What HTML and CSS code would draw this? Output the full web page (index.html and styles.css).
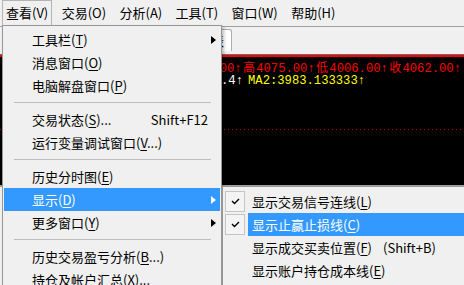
FILE: index.html
```html
<!DOCTYPE html>
<html lang="zh-CN">
<head>
  <meta charset="UTF-8">
  <title>查看菜单</title>
  <link rel="stylesheet" href="styles.css">
</head>
<body>
  <nav class="menubar">
    <span class="top-item open">查看(V)</span>
    <span class="top-item">交易(O)</span>
    <span class="top-item">分析(A)</span>
    <span class="top-item">工具(T)</span>
    <span class="top-item">窗口(W)</span>
    <span class="top-item">帮助(H)</span>
  </nav>

  <div class="toolbar">
    <div class="tab">行情图表</div>
  </div>

  <div class="chart">
    <div class="chart-body">
      <div class="chart-line quote"><span class="cn">开</span>4020.00↑<span class="cn">高</span>4075.00↑<span class="cn">低</span>4006.00↑<span class="cn">收</span>4062.00↑</div>
      <div class="chart-line ma">
        <span class="ma1">MA1:4030.4↑</span>
        <span class="ma2">MA2:3983.133333↑</span>
      </div>
      <div class="level"></div>
    </div>
  </div>
  <div class="hscroll"></div>

  <!-- 查看 下拉菜单 -->
  <div class="dropdown">
    <div class="menu-item"><span class="label">工具栏(<u>T</u>)</span><span class="arrow"><i></i></span></div>
    <div class="menu-item"><span class="label">消息窗口(<u>O</u>)</span><span class="arrow"></span></div>
    <div class="menu-item"><span class="label">电脑解盘窗口(<u>P</u>)</span><span class="arrow"></span></div>
    <div class="sep"><hr></div>
    <div class="menu-item"><span class="label">交易状态(<u>S</u>)...</span><span class="key">Shift+F12</span><span class="arrow"></span></div>
    <div class="menu-item"><span class="label">运行变量调试窗口(<u>V</u>...)</span><span class="arrow"></span></div>
    <div class="sep"><hr></div>
    <div class="menu-item"><span class="label">历史分时图(<u>E</u>)</span><span class="arrow"></span></div>
    <div class="menu-item active"><span class="label">显示(<u>D</u>)</span><span class="arrow"><i></i></span></div>
    <div class="menu-item"><span class="label">更多窗口(<u>Y</u>)</span><span class="arrow"><i></i></span></div>
    <div class="sep"><hr></div>
    <div class="menu-item"><span class="label">历史交易盈亏分析(<u>B</u>...)</span><span class="arrow"></span></div>
    <div class="menu-item"><span class="label">持仓及帐户汇总(<u>X</u>)...</span><span class="arrow"></span></div>
  </div>

  <!-- 显示 子菜单 -->
  <div class="submenu">
    <div class="sub-item">
      <span class="check checked">
        <svg width="18" height="19" viewBox="0 0 18 19"><polyline points="6,9 8.5,11.5 13,7" fill="none" stroke="#000" stroke-width="1.4"/></svg>
      </span>
      <span class="sub-label"><span class="sub-text">显示交易信号连线(<u>L</u>)</span></span>
    </div>
    <div class="sub-item">
      <span class="check checked">
        <svg width="18" height="19" viewBox="0 0 18 19"><polyline points="6,9 8.5,11.5 13,7" fill="none" stroke="#000" stroke-width="1.4"/></svg>
      </span>
      <span class="sub-label active"><span class="sub-text">显示止赢止损线(<u>C</u>)</span></span>
    </div>
    <div class="sub-item">
      <span class="check"></span>
      <span class="sub-label"><span class="sub-text">显示成交买卖位置(<u>F</u>)</span><span class="sub-key">(Shift+B)</span></span>
    </div>
    <div class="sub-item">
      <span class="check"></span>
      <span class="sub-label"><span class="sub-text">显示账户持仓成本线(<u>E</u>)</span></span>
    </div>
  </div>
</body>
</html>
```

FILE: styles.css
```css
body {
  margin: 0;
  width: 464px;
  height: 285px;
  overflow: hidden;
  position: relative;
  background: #f0f0f0;
  font-family: "Noto Sans CJK SC", "Microsoft YaHei", sans-serif;
  font-size: 13px;
  color: #000;
}
u { text-decoration-thickness: 1px; text-underline-offset: 2px; }

/* menu bar */
.menubar {
  display: flex;
  height: 26px;
  padding-left: 2px;
  border-bottom: 1px solid #a0a0a0;
  box-sizing: content-box;
}
.top-item {
  padding: 0 3px;
  margin-right: 5.4px;
  line-height: 24px;
  border: 1px solid transparent;
  border-bottom: none;
}
.top-item.open { border-color: #b4b4b4; }

/* toolbar + tab */
.toolbar {
  height: 27px;
  display: flex;
  align-items: flex-start;
  padding-left: 140px;
}
.tab {
  margin-top: 2px;
  width: 92px;
  height: 22px;
  box-sizing: border-box;
  background: #fff;
  border: 1px solid #adadad;
  border-bottom: none;
  border-radius: 0 3px 0 0;
  text-align: right;
  padding-right: 7px;
  line-height: 21px;
}

/* chart */
.chart {
  border-top: 1px solid #6d6d6d;
  border-bottom: 2px solid #a0a0a0;
  background: #000;
}
.chart-body {
  height: 126px;
  border-top: 2px solid #ff0000;
  padding-top: 2px;
  box-sizing: content-box;
  font-family: "Liberation Mono", "DejaVu Sans Mono", "Noto Sans CJK SC", monospace;
  font-size: 12.2px;
}
.chart-line {
  height: 15px;
  line-height: 15px;
  white-space: nowrap;
}
.quote {
  color: #ff0000;
  text-align: right;
  padding-right: 3px;
}
.quote .cn {
  font-family: "Noto Sans CJK SC", sans-serif;
  font-size: 12px;
  padding: 0 1.3px;
}
.ma { display: flex; }
.ma1 {
  flex: 0 0 243px;
  text-align: right;
  color: #fff;
}
.ma2 { color: #ffff00; margin-left: 5px; }
.level {
  margin-top: 40px;
  height: 1px;
  background: repeating-linear-gradient(to right, #b00000 0 1px, transparent 1px 4px);
}
.hscroll { height: 10px; }

/* dropdown */
.dropdown {
  position: absolute;
  left: 2px;
  top: 25px;
  width: 220px;
  bottom: -20px;
  box-sizing: border-box;
  padding: 2px 1px;
  background: #f0f0f0;
  border: 1px solid #979797;
  box-shadow: 2px 2px 3px rgba(0, 0, 0, 0.25);
}
.menu-item {
  display: flex;
  align-items: center;
  height: 23px;
  padding: 0 4px 0 28px;
  white-space: nowrap;
}
.menu-item .label { flex: 1; }
.menu-item.active { background: #3399ff; color: #fff; }
.arrow {
  width: 8px;
  display: flex;
  justify-content: flex-end;
}
.arrow i {
  width: 0;
  height: 0;
  border-left: 5px solid #000;
  border-top: 4px solid transparent;
  border-bottom: 4px solid transparent;
}
.active .arrow i { border-left-color: #fff; }
.sep {
  height: 11px;
  display: flex;
  align-items: center;
  padding: 0 9px 0 10px;
}
.sep hr {
  flex: 1;
  margin: 0;
  border: none;
  height: 1px;
  background: #bdbdbd;
}

/* submenu */
.submenu {
  position: absolute;
  left: 222px;
  top: 186px;
  right: -10px;
  bottom: -10px;
  padding: 3px 0 0 2px;
  background: #f0f0f0;
  border: 1px solid #979797;
}
.sub-item {
  display: flex;
  height: 23px;
  white-space: nowrap;
}
.check {
  flex: 0 0 20px;
  height: 21px;
  margin-top: 1px;
  box-sizing: border-box;
}
.check.checked {
  border: 1px solid #c4c4c4;
  background: #f4f4f4;
}
.check svg { display: block; }
.sub-label {
  flex: 1;
  display: flex;
  align-items: center;
  margin-left: 3px;
  padding-left: 4px;
}
.sub-label.active { background: #3399ff; color: #fff; }
.sub-text { width: 131px; }
```
